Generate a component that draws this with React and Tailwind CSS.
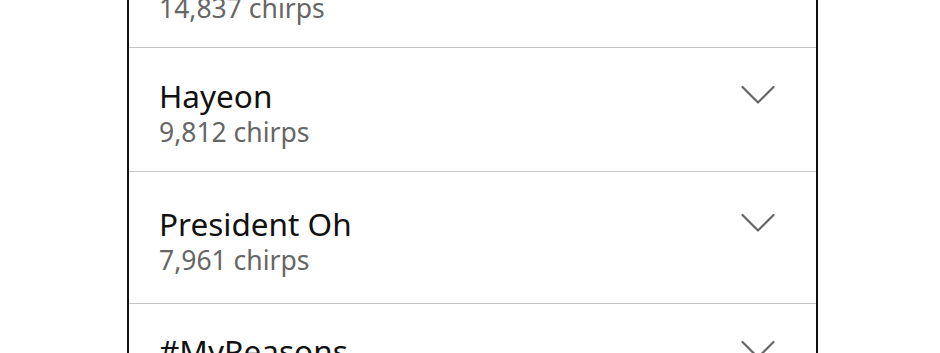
import React from "react";

const rows = [
  { name: "Hayeon", count: "9,812 chirps", h: "h-[124px]", pt: "pt-[28px]" },
  { name: "President Oh", count: "7,961 chirps", h: "h-[132px]", pt: "pt-[32px]" },
  { name: "#MyReasons", count: "6,402 chirps", h: "h-[124px]", pt: "pt-[27px]" },
];

function Chevron() {
  return (
    <svg width="34" height="20" viewBox="0 0 34 20" fill="none">
      <path d="M1.5 2 L17 17.5 L32.5 2" stroke="#666" strokeWidth="2.2" strokeLinecap="round" strokeLinejoin="round" />
    </svg>
  );
}

export default function App() {
  return (
    <div className="w-[940px] h-[353px] bg-white overflow-hidden" style={{ fontFamily: '"Noto Sans", "Open Sans", sans-serif' }}>
      <div className="ml-[127px] w-[691px] h-full border-x-2 border-[#111]">
        <div className="h-[48px] border-b border-[#c6c6c6] relative">
          <div className="absolute left-[30px] bottom-[24px] text-[26.5px] leading-[30px] text-[#666]">14,837 chirps</div>
        </div>
        {rows.map((r) => (
          <div key={r.name} className={`${r.h} border-b border-[#c6c6c6] pl-[30px] pr-[41px] flex items-start justify-between ${r.pt}`}>
            <div>
              <div className="text-[31.5px] leading-[40px] text-[#111]">{r.name}</div>
              <div className="text-[26.5px] leading-[30px] text-[#666] mt-[1px]">{r.count}</div>
            </div>
            <div className="pt-[9px]"><Chevron /></div>
          </div>
        ))}
      </div>
    </div>
  );
}
